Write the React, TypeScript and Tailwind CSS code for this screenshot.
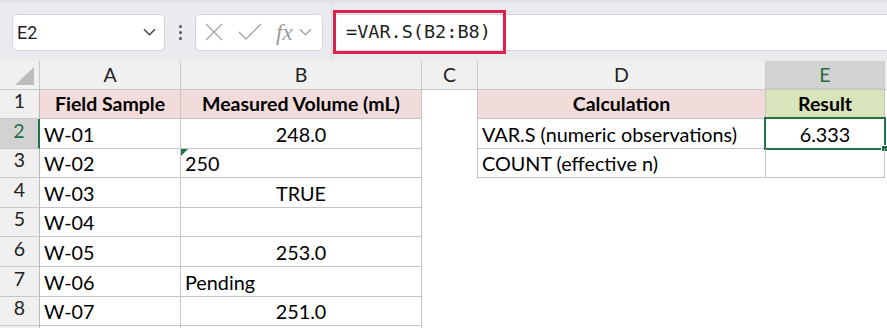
import React from "react";

const cellFont = { fontFamily: "Lato, 'Open Sans', sans-serif" };

type Cell = {
  text?: string;
  align?: "left" | "center";
  bold?: boolean;
  fill?: string;
  border?: boolean;
};

const rows: { h: string; cells: Cell[] }[] = [
  {
    h: "h-[29px]",
    cells: [
      { text: "Field Sample", align: "center", bold: true, fill: "bg-[#f2dcdb]", border: true },
      { text: "Measured Volume (mL)", align: "center", bold: true, fill: "bg-[#f2dcdb]", border: true },
      {},
      { text: "Calculation", align: "center", bold: true, fill: "bg-[#f2dcdb]", border: true },
      { text: "Result", align: "center", bold: true, fill: "bg-[#d8e4bc]", border: true },
    ],
  },
  {
    h: "h-[30px]",
    cells: [
      { text: "W-01", border: true },
      { text: "248.0", align: "center", border: true },
      {},
      { text: "VAR.S (numeric observations)", border: true },
      { text: "6.333", align: "center", border: true },
    ],
  },
  {
    h: "h-[29px]",
    cells: [
      { text: "W-02", border: true },
      { text: "250", border: true },
      {},
      { text: "COUNT (effective n)", border: true },
      { text: "", border: true },
    ],
  },
  { h: "h-[30px]", cells: [{ text: "W-03", border: true }, { text: "TRUE", align: "center", border: true }, {}, {}, {}] },
  { h: "h-[29px]", cells: [{ text: "W-04", border: true }, { text: "", border: true }, {}, {}, {}] },
  { h: "h-[30px]", cells: [{ text: "W-05", border: true }, { text: "253.0", align: "center", border: true }, {}, {}, {}] },
  { h: "h-[30px]", cells: [{ text: "W-06", border: true }, { text: "Pending", border: true }, {}, {}, {}] },
  { h: "h-[29px]", cells: [{ text: "W-07", border: true }, { text: "251.0", align: "center", border: true }, {}, {}, {}] },
];

const colWidths = ["w-[141px]", "w-[241px]", "w-[55px]", "w-[289px]", "w-[119px]"];

const Chevron = ({ className }: { className?: string }) => (
  <svg viewBox="0 0 14 8" className={className} fill="none" stroke="currentColor" strokeWidth="1.6">
    <path d="M1 1l6 6 6-6" />
  </svg>
);

const FormulaBar = () => (
  <div className="h-[61px] bg-[#e9ebee] border-t-[3px] border-[#dfe2e6] flex items-center relative">
    {/* name box */}
    <div className="ml-[12px] w-[153px] h-[37px] bg-white border border-[#d3d6da] rounded-[5px] flex items-center justify-between pl-[4px] pr-[8px]">
      <span className="text-[18px] text-[#1f1f1f]" style={{ fontFamily: "Roboto, sans-serif" }}>
        E2
      </span>
      <Chevron className="w-[13px] h-[8px] text-[#444]" />
    </div>
    <div className="w-[30px] flex flex-col items-center gap-[3px]">
      <span className="w-[3px] h-[3px] rounded-full bg-[#555]" />
      <span className="w-[3px] h-[3px] rounded-full bg-[#555]" />
      <span className="w-[3px] h-[3px] rounded-full bg-[#555]" />
    </div>
    {/* cancel / enter / fx */}
    <div className="w-[128px] h-[37px] bg-white border border-[#d3d6da] rounded-[5px] flex items-center pl-[9px] text-[#a6a6a6]">
      <svg viewBox="0 0 18 18" className="w-[18px] h-[18px]" stroke="currentColor" strokeWidth="1.4">
        <path d="M1 1l16 16M17 1L1 17" />
      </svg>
      <svg viewBox="0 0 24 18" className="w-[24px] h-[18px] ml-[15px]" fill="none" stroke="currentColor" strokeWidth="1.4">
        <path d="M1 9l7 7L23 1" />
      </svg>
      <span
        className="ml-[14px] text-[23px] italic leading-none text-[#9a9a9a]"
        style={{ fontFamily: "'Liberation Serif', 'DejaVu Serif', serif" }}
      >
        fx
      </span>
      <Chevron className="w-[13px] h-[8px] ml-[6px] text-[#a6a6a6]" />
    </div>
    <div className="ml-[8px] h-full w-px bg-[#d6d9dd]" />
    {/* formula input */}
    <div className="flex-1 h-[37px] bg-white border-y border-[#d3d6da] flex items-center relative">
      <div className="absolute left-[1px] top-[-5px] w-[173px] h-[44px] border-[3px] border-[#e0204c]" />
      <span
        className="ml-[14px] text-[18.5px] text-[#1f1f1f]"
        style={{ fontFamily: "'DejaVu Sans Mono', 'Liberation Mono', monospace" }}
      >
        =VAR.S(B2:B8)
      </span>
    </div>
  </div>
);

const ColumnHeaders = () => {
  const letters = ["A", "B", "C", "D", "E"];
  return (
    <div className="flex h-[29px] bg-[#f0f0f0] border-b border-[#c8c8c8]" style={cellFont}>
      <div className="w-[40px] border-r border-[#c8c8c8] relative">
        <svg viewBox="0 0 20 18" className="absolute right-[4px] bottom-[4px] w-[20px] h-[18px]">
          <path d="M19 0V18H0Z" fill="#bcbcbc" />
        </svg>
      </div>
      {letters.map((l, i) => {
        const sel = l === "E";
        return (
          <div
            key={l}
            className={`${colWidths[i]} flex items-center justify-center text-[19.5px] ${
              sel ? "bg-[#d2d2d2] text-[#1e6e42] border-b-2 border-[#217346] -mb-px" : "text-[#222]"
            } ${l === "D" ? "border-l border-r border-[#c8c8c8]" : l === "C" ? "" : "border-r border-[#c8c8c8]"}`}
          >
            {l}
          </div>
        );
      })}
      <div className="flex-1" />
    </div>
  );
};

const App = () => {
  return (
    <div className="w-[887px] h-[328px] overflow-hidden bg-white">
      <FormulaBar />
      <ColumnHeaders />
      {rows.map((r, ri) => {
        const rowNum = ri + 1;
        const selRow = rowNum === 2;
        return (
          <div key={ri} className={`flex ${r.h}`} style={cellFont}>
            <div
              className={`w-[40px] flex items-end justify-center pb-[3px] text-[19.5px] border-b border-[#c8c8c8] ${
                selRow
                  ? "bg-[#d2d2d2] text-[#1e6e42] border-r-2 border-r-[#217346]"
                  : "bg-[#f0f0f0] text-[#222] border-r border-r-[#b8b8b8]"
              }`}
            >
              {rowNum}
            </div>
            {r.cells.map((c, ci) => {
              const isD = ci === 3;
              const borders = c.border
                ? `border-b border-[#c4c4c4] ${isD ? "border-l border-r" : "border-r"}`
                : "";
              const e2 = rowNum === 2 && ci === 4;
              const b3 = rowNum === 3 && ci === 1;
              return (
                <div
                  key={ci}
                  className={`${colWidths[ci]} relative flex items-end pb-[3px] px-[4px] text-black leading-none ${
                    c.fill ?? ""
                  } ${borders} ${c.align === "center" ? "justify-center" : "justify-start"} ${
                    c.bold ? "font-bold text-[19.5px]" : "text-[19.8px]"
                  }`}
                >
                  <span className="leading-[22px]">{c.text}</span>
                  {e2 && (
                    <>
                      <div className="absolute -left-[2px] -top-[2px] w-[122px] h-[33px] border-2 border-[#217346]" />
                      <div className="absolute -right-[4px] -bottom-[4px] w-[7px] h-[7px] bg-[#217346] border border-white" />
                    </>
                  )}
                  {b3 && (
                    <svg viewBox="0 0 7 7" className="absolute left-0 top-0 w-[7px] h-[7px]">
                      <path d="M0 0H7L0 7Z" fill="#1e7145" />
                    </svg>
                  )}
                </div>
              );
            })}
            <div className="flex-1" />
          </div>
        );
      })}
      <div className="flex h-[10px]">
        <div className="w-[40px] bg-[#f0f0f0] border-r border-[#b8b8b8]" />
        <div className="w-[141px] border-r border-[#c4c4c4]" />
        <div className="w-[241px] border-r border-[#c4c4c4]" />
      </div>
    </div>
  );
};

export default App;
